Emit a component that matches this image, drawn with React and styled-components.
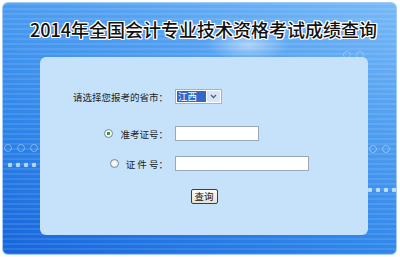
import React from "react";
import styled, { createGlobalStyle } from "styled-components";

const Global = createGlobalStyle`
  html, body { margin: 0; padding: 0; background: #ffffff; }
  body { font-family: "Noto Sans CJK SC", "Noto Sans", sans-serif; }
`;

const dot = (x, y, a = 0.65) =>
  `radial-gradient(circle at ${x}px ${y}px, rgba(255,255,255,${a}) 0 2px, rgba(255,255,255,0) 2.6px)`;
const ring = (x, y, a = 0.3) =>
  `radial-gradient(circle at ${x}px ${y}px, rgba(255,255,255,0) 0 2.6px, rgba(255,255,255,${a}) 3px 3.6px, rgba(255,255,255,0) 4.2px)`;

const Frame = styled.div`
  box-sizing: border-box;
  margin: 2px 0 0 2px;
  width: 395px;
  height: 253px;
  border: 1px solid #9fcaf5;
  border-radius: 6px;
  display: flex;
  flex-direction: column;
  overflow: hidden;
  background:
    ${dot(7, 162)}, ${dot(15, 162)}, ${dot(23, 162)}, ${dot(31, 162)},
    ${ring(5, 145)}, ${ring(18, 145)}, ${ring(31, 145)},
    ${dot(367, 187)}, ${dot(375, 187)}, ${dot(383, 187)}, ${dot(391, 187)},
    ${ring(370, 146)}, ${ring(383, 146)},
    ${ring(344, 52, 0.22)}, ${ring(357, 52, 0.22)},
    radial-gradient(ellipse 60px 22px at 245px 42px, rgba(255,255,255,0.5), rgba(255,255,255,0) 70%),
    repeating-linear-gradient(180deg, rgba(255,255,255,0.10) 0 2px, rgba(255,255,255,0) 2px 5px),
    linear-gradient(200deg, #77b9f7 0%, #4d9cf0 35%, #2f86ea 65%, #1665dc 100%);
`;

const Title = styled.h1`
  margin: 0;
  height: 54px;
  display: flex;
  align-items: center;
  justify-content: center;
  padding: 0 0 2px 8px;
  box-sizing: border-box;
  font-family: "Noto Sans CJK SC", sans-serif;
  font-size: 18px;
  font-weight: 500;
  letter-spacing: 0;
  color: #111111;
  text-shadow:
    1px 0 0 #fff, -1px 0 0 #fff, 0 1px 0 #fff, 0 -1px 0 #fff,
    1px 1px 0 #fff, -1px -1px 0 #fff, 1px -1px 0 #fff, -1px 1px 0 #fff;
`;

const Panel = styled.div`
  margin: 0 28px 0 37px;
  height: 178px;
  border-radius: 6px;
  background: #c6e2fb;
  display: flex;
  flex-direction: column;
  align-items: stretch;
  padding-top: 32px;
  box-sizing: border-box;
`;

const Row = styled.div`
  display: grid;
  grid-template-columns: 128px auto;
  column-gap: 7px;
  align-items: center;
  margin-top: ${(p) => p.$gap || 0}px;
`;

const Label = styled.div`
  display: flex;
  justify-content: flex-end;
  align-items: center;
  gap: 6px;
  font-size: 9.5px;
  color: #222;
  white-space: pre;
`;

const Radio = styled.span`
  box-sizing: border-box;
  width: 9px;
  height: 9px;
  border-radius: 50%;
  border: 1px solid #7b8a99;
  background: radial-gradient(circle at 50% 50%, ${(p) => (p.$checked ? "#2aa32a 0 1.6px, #ffffff 2px" : "#ffffff 0")}, #e3e3e3 100%);
  margin-right: 1px;
`;

const Select = styled.div`
  box-sizing: border-box;
  width: 47px;
  height: 15px;
  border: 1px solid #9fb4cc;
  background: #ffffff;
  display: flex;
  align-items: stretch;
  padding: 1px;
`;

const Selected = styled.span`
  flex: 1;
  background: #3169c6;
  color: #ffffff;
  font-size: 9.5px;
  line-height: 11px;
  padding-left: 1px;
`;

const Arrow = styled.span`
  width: 13px;
  margin-left: 1px;
  background: #d9e5f7;
  display: flex;
  align-items: center;
  justify-content: center;
`;

const TextInput = styled.div`
  box-sizing: border-box;
  width: ${(p) => p.$w}px;
  height: 15px;
  border: 1px solid #9aa9b8;
  background: #ffffff;
`;

const ButtonRow = styled.div`
  display: flex;
  justify-content: center;
  margin-top: 18px;
`;

const Button = styled.button`
  box-sizing: border-box;
  width: 27px;
  height: 15px;
  padding: 0;
  border: 1px solid #3d3d3d;
  border-radius: 2px;
  background: linear-gradient(#fbfbf8, #e6e3d6);
  font-family: "Noto Sans CJK SC", sans-serif;
  font-size: 9.5px;
  line-height: 13px;
  color: #111;
`;

export default function App() {
  return (
    <>
      <Global />
      <Frame>
        <Title>2014年全国会计专业技术资格考试成绩查询</Title>
        <Panel>
          <Row>
            <Label>请选择您报考的省市：</Label>
            <Select>
              <Selected>江西</Selected>
              <Arrow>
                <svg width="7" height="5" viewBox="0 0 7 5">
                  <path d="M1 1 L3.5 3.5 L6 1" fill="none" stroke="#4d6185" strokeWidth="1.3" />
                </svg>
              </Arrow>
            </Select>
          </Row>
          <Row $gap={22}>
            <Label>
              <Radio $checked />
              准考证号：
            </Label>
            <TextInput $w={84} />
          </Row>
          <Row $gap={15}>
            <Label>
              <Radio />
              {"证 件 号："}
            </Label>
            <TextInput $w={134} />
          </Row>
          <ButtonRow>
            <Button>查询</Button>
          </ButtonRow>
        </Panel>
      </Frame>
    </>
  );
}
